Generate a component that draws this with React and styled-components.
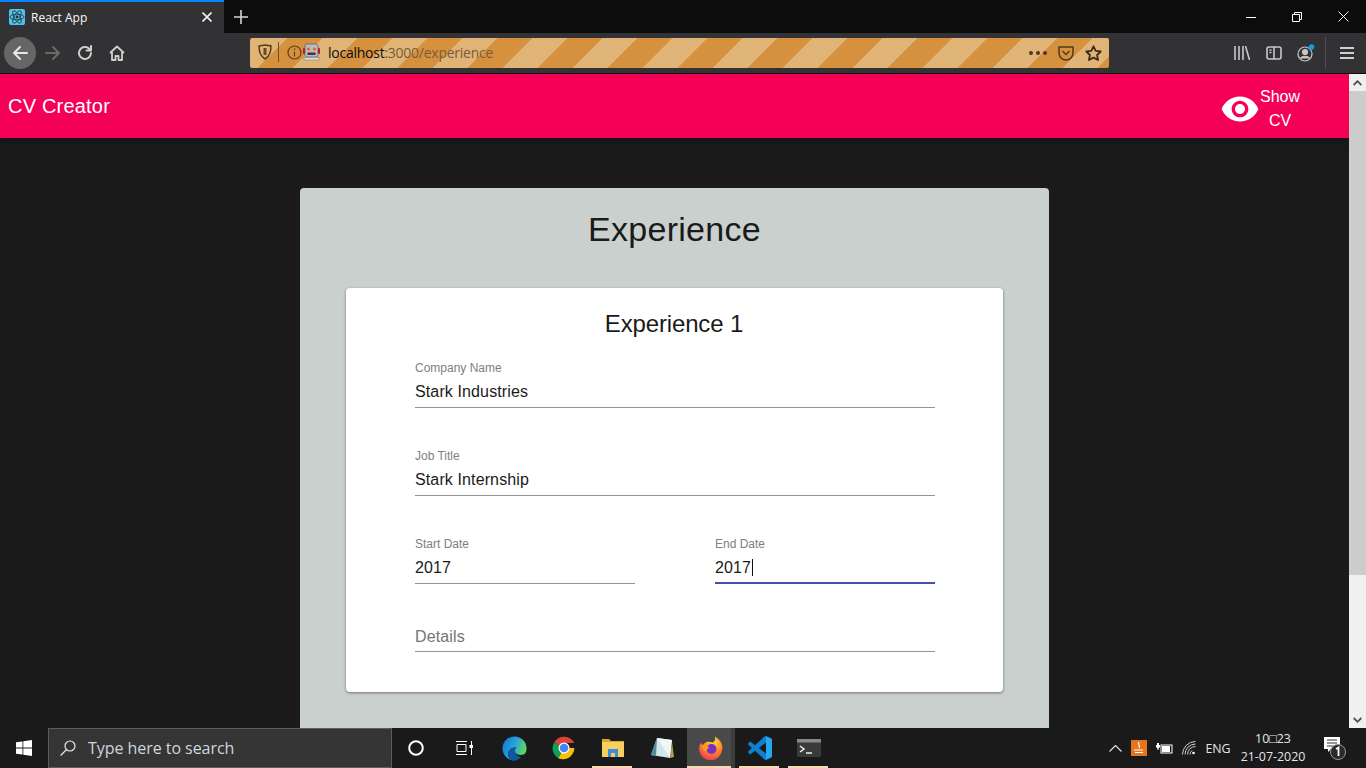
import React from "react";
import styled, { createGlobalStyle } from "styled-components";

const GlobalStyle = createGlobalStyle`
  html, body {
    margin: 0;
    height: 768px;
    overflow: hidden;
    background: #1a1a1a;
    font-family: "Liberation Sans", Arial, sans-serif;
  }
  * { box-sizing: border-box; }
`;

const Screen = styled.div`
  width: 1366px;
  height: 768px;
  display: flex;
  flex-direction: column;
  overflow: hidden;
`;

/* browser chrome */
const TabStrip = styled.div`
  height: 33px;
  background: #0c0c0c;
  display: flex;
  align-items: stretch;
`;

const Tab = styled.div`
  width: 224px;
  background: #323234;
  border-top: 2px solid #0a84ff;
  display: flex;
  align-items: center;
  padding: 0 12px 1px 9px;
  gap: 6px;
  color: #f9f9fa;
  font: 12px "Open Sans", sans-serif;
`;

const TabTitle = styled.span`
  flex: 1;
`;

const NewTab = styled.div`
  width: 34px;
  display: flex;
  align-items: center;
  justify-content: center;
`;

const WindowControls = styled.div`
  margin-left: auto;
  display: flex;
`;

const WindowButton = styled.div`
  width: 46px;
  display: flex;
  align-items: center;
  justify-content: center;
`;

const NavBar = styled.div`
  height: 41px;
  background: #323234;
  border-bottom: 1px solid #0c0c0c;
  display: flex;
  align-items: center;
  padding: 0 8px 0 4px;
`;

const NavButton = styled.div`
  width: ${(p) => p.$w || 32}px;
  height: 32px;
  margin-left: ${(p) => p.$gap || 0}px;
  border-radius: 50%;
  display: flex;
  align-items: center;
  justify-content: center;
  background: ${(p) => (p.$hover ? "#666667" : "transparent")};
`;

const UrlBar = styled.div`
  width: 859px;
  height: 30px;
  margin-left: 117px;
  border-radius: 2px;
  display: flex;
  align-items: center;
  padding: 0 7px 2px 8px;
  background: repeating-linear-gradient(
    135deg,
    #d6913f 0 1.5px,
    #e0b377 1.5px 26.25px,
    #d6913f 26.25px 49.5px
  );
  font: 14px "Open Sans", sans-serif;
  letter-spacing: -0.25px;
`;

const UrlDivider = styled.span`
  width: 1px;
  height: 20px;
  background: #6e5230;
  margin: 0 8px 0 6px;
`;

const RobotSlot = styled.span`
  display: flex;
  margin-left: 1px;
`;

const UrlHost = styled.span`
  color: #0c0c0d;
  margin-left: 8px;
`;

const UrlPath = styled.span`
  color: #7a5c38;
`;

const UrlActions = styled.div`
  margin-left: auto;
  display: flex;
  align-items: center;
  gap: 11px;
  padding-top: 2px;
`;

const NavTools = styled.div`
  margin-left: auto;
  display: flex;
  align-items: center;
  height: 100%;
`;

const ToolDivider = styled.span`
  width: 1px;
  height: 32px;
  background: #4f4f51;
  margin: 0 10px 0 3px;
`;

/* page */
const Viewport = styled.div`
  flex: 1;
  min-height: 0;
  display: flex;
  overflow: hidden;
`;

const Page = styled.div`
  flex: 1;
  min-width: 0;
  background: #1a1a1a;
`;

const AppBar = styled.header`
  height: 64px;
  background: #f50057;
  color: #fff;
  display: flex;
  align-items: center;
  justify-content: space-between;
  padding: 0 49px 0 8px;
  box-shadow: 0 2px 4px rgba(0, 0, 0, 0.4);
`;

const Brand = styled.div`
  font-size: 20px;
  line-height: 1.6;
  letter-spacing: 0.2px;
`;

const ShowButton = styled.div`
  display: flex;
  align-items: center;
  padding-top: 6px;
`;

const ShowLabel = styled.div`
  width: 40px;
  font-size: 16px;
  line-height: 24px;
  text-align: center;
`;

const Paper = styled.section`
  width: 749px;
  margin: 50px auto 0;
  padding: 0 46px 60px;
  background: #cad0ce;
  border-radius: 4px 4px 0 0;
`;

const Heading = styled.h1`
  margin: 0;
  padding: 21px 0 39px;
  font-size: 34px;
  line-height: 40px;
  font-weight: 400;
  letter-spacing: 0.3px;
  text-align: center;
  color: #1a1a1a;
`;

const Card = styled.div`
  width: 657px;
  background: #fff;
  border-radius: 4px;
  padding: 20px 68px 40px 69px;
  box-shadow: 0 1px 3px rgba(0, 0, 0, 0.45);
`;

const CardTitle = styled.h2`
  margin: 0 0 22px;
  padding-right: 2px;
  font-size: 24px;
  line-height: 32px;
  font-weight: 400;
  letter-spacing: -0.15px;
  text-align: center;
  color: #1a1a1a;
`;

const Form = styled.div`
  display: flex;
  flex-direction: column;
  gap: 42px;
`;

const Row = styled.div`
  display: flex;
  justify-content: space-between;
`;

const Field = styled.div`
  width: ${(p) => p.$w || 520}px;
  height: ${(p) => (p.$empty ? "26px" : "46px")};
  display: flex;
  flex-direction: column;
  justify-content: flex-end;
  border-bottom: ${(p) =>
    p.$focused ? "2px solid #3f51b5" : "1px solid #949494"};
  padding-bottom: ${(p) => (p.$focused ? "5px" : "6px")};
`;

const FieldLabel = styled.label`
  font-size: 12px;
  line-height: 14px;
  color: #808080;
  margin-bottom: 7px;
`;

const FieldValue = styled.div`
  font-size: 16px;
  line-height: 19px;
  letter-spacing: 0.12px;
  color: #1a1a1a;
  display: flex;
  align-items: center;
`;

const Placeholder = styled(FieldValue)`
  color: #757575;
  margin-bottom: -1px;
`;

const Caret = styled.span`
  width: 1px;
  height: 17px;
  margin-left: 1px;
  background: #111;
`;

/* scrollbar */
const ScrollBar = styled.div`
  width: 17px;
  background: #f0f0f0;
  display: flex;
  flex-direction: column;
`;

const ScrollArrow = styled.div`
  height: 17px;
  display: flex;
  align-items: center;
  justify-content: center;
`;

const ScrollThumb = styled.div`
  height: 484px;
  background: #cdcdcd;
`;

const ScrollTrack = styled.div`
  flex: 1;
`;

/* taskbar */
const Taskbar = styled.footer`
  height: 40px;
  background: #1a1a1a;
  display: flex;
  align-items: stretch;
  color: #fff;
`;

const StartButton = styled.div`
  width: 48px;
  display: flex;
  align-items: center;
  justify-content: center;
`;

const SearchBox = styled.div`
  width: 344px;
  background: #353535;
  border: 1px solid #5c5c5c;
  display: flex;
  align-items: center;
  padding-left: 11px;
  gap: 12px;
  font: 16px "Open Sans", sans-serif;
  letter-spacing: -0.05px;
  color: #cfd6dc;
`;

const TaskButton = styled.div`
  position: relative;
  width: ${(p) => p.$w || 49}px;
  margin-left: ${(p) => p.$gap || 0}px;
  display: flex;
  align-items: center;
  justify-content: center;
  background: ${(p) =>
    p.$active
      ? "linear-gradient(to right, #494949 44px, #3c3c3c 44px)"
      : "transparent"};
  ${(p) =>
    p.$open &&
    `&::after {
      content: "";
      position: absolute;
      bottom: 0;
      left: ${p.$active ? 0 : 4}px;
      width: ${p.$active ? 44 : 40}px;
      height: 2px;
      background: #f7d7b0;
    }`}
`;

const Tray = styled.div`
  margin-left: auto;
  padding-right: 9px;
  display: flex;
  align-items: center;
  font: 12.4px "Open Sans", sans-serif;
  color: #e6e6e6;
`;

const TrayItem = styled.div`
  width: ${(p) => p.$w}px;
  height: 100%;
  display: flex;
  align-items: center;
  justify-content: center;
`;

const Clock = styled.div`
  width: 76px;
  text-align: center;
  line-height: 18px;
`;

const ic = { fill: "none", stroke: "currentColor", strokeWidth: 2, strokeLinecap: "round", strokeLinejoin: "round" };

const ReactLogo = () => (
  <svg width="16" height="16" viewBox="0 0 16 16">
    <rect width="16" height="16" rx="2" fill="#4fc3e8" />
    <g fill="none" stroke="#21323c" strokeWidth="0.8">
      <ellipse cx="8" cy="8" rx="7" ry="2.8" />
      <ellipse cx="8" cy="8" rx="7" ry="2.8" transform="rotate(60 8 8)" />
      <ellipse cx="8" cy="8" rx="7" ry="2.8" transform="rotate(120 8 8)" />
    </g>
    <circle cx="8" cy="8" r="1.4" fill="#21323c" />
  </svg>
);

const Robot = () => (
  <svg width="17" height="18" viewBox="0 0 17 18">
    <rect x="0" y="5" width="2" height="6" rx="1" fill="#c8102e" />
    <rect x="15" y="5" width="2" height="6" rx="1" fill="#c8102e" />
    <rect x="2" y="1" width="13" height="13" rx="2" fill="#b9bcc0" stroke="#55585c" strokeWidth="0.7" />
    <circle cx="5.5" cy="6" r="1.6" fill="#e8641b" />
    <circle cx="11.5" cy="6" r="1.6" fill="#e8641b" />
    <rect x="4.5" y="9.5" width="8" height="2.5" fill="#4a3030" />
    <rect x="1" y="14.5" width="15" height="2.5" fill="#d9dadc" stroke="#77797c" strokeWidth="0.5" />
  </svg>
);

const Edge = () => (
  <svg width="25" height="25" viewBox="0 0 25 25">
    <defs>
      <linearGradient id="edgeA" x1="0" y1="0" x2="1" y2="0.4">
        <stop offset="0" stopColor="#1273d0" />
        <stop offset="0.55" stopColor="#27a3dc" />
        <stop offset="1" stopColor="#5fd75f" />
      </linearGradient>
    </defs>
    <circle cx="12.5" cy="12.5" r="12" fill="url(#edgeA)" />
    <path d="M24.5 15c-1 3-3.6 4-6 4-3.4 0-6-1.8-6-4.4 0-1.3 1-2.3 2.2-3-4.6-.4-8.700 2.400-8.700 6.600 0 2.800 2.400 5.600 6 6.300 6 .9 11-3 12.500-9.500z" fill="#1a1a1a" />
    <path d="M6 18.200c0-4.200 4.100-7 8.700-6.600-1.200.7-2.200 1.700-2.200 3 0 3.400 3 6 6.500 6.500-2 2.600-5 3.700-8 3.400-3-.5-5-3.400-5-6.300z" fill="#0c59a4" />
  </svg>
);

const Chrome = () => (
  <svg width="24" height="24" viewBox="0 0 24 24">
    <path d="M12 12L2.200 6.300A11.500 11.500 0 0 1 22.400 7H12z" fill="#db4437" />
    <path d="M12 12l-5.700 10.200A11.500 11.500 0 0 1 2.200 6.300z" fill="#0f9d58" />
    <path d="M12 12h10.400A11.500 11.500 0 0 1 6.300 22.200z" fill="#f4c20d" />
    <circle cx="12" cy="12" r="5.500" fill="#fff" />
    <circle cx="12" cy="12" r="4.300" fill="#4285f4" />
  </svg>
);

const Folder = () => (
  <svg width="22" height="20" viewBox="0 0 22 20">
    <path d="M0 1h7l2 2h13v3H0z" fill="#e0a526" />
    <rect x="0" y="4" width="22" height="15" fill="#f6cf5e" />
    <rect x="6" y="11" width="10" height="8" fill="#3a8fd6" />
    <rect x="9" y="15" width="4" height="4" fill="#f6cf5e" />
  </svg>
);

const Notepad = () => (
  <svg width="24" height="24" viewBox="0 0 24 24">
    <path d="M7 2l15 2-2 18L1 19z" fill="#cfe7ea" />
    <path d="M7 2l15 2-2 18z" fill="#eef6f6" />
    <path d="M7 2L1 19l5 1z" fill="#4f8f9c" />
    <path d="M22 6l2 15-4 1z" fill="#b49b58" />
  </svg>
);

const Firefox = () => (
  <svg width="24" height="24" viewBox="0 0 24 24">
    <defs>
      <radialGradient id="foxA" cx="0.6" cy="0.2" r="0.95">
        <stop offset="0" stopColor="#ffd93b" />
        <stop offset="0.45" stopColor="#ff8a2a" />
        <stop offset="1" stopColor="#e8255e" />
      </radialGradient>
    </defs>
    <path d="M16 .5c3.500 2.500 6 4.500 7 8.500.6 2 .6 4 0 5.500A11.500 11.500 0 1 1 2 6.500C2.500 8 3 8.500 4 9c1-2 3-3 5-3.500.5 0 4 1 5 1 2-1.500 2.500-3.500 2-6z" fill="url(#foxA)" />
    <circle cx="12.500" cy="13" r="5" fill="#7a2fc4" />
    <path d="M3 9.500c3-1 6 0 7 2.500-2 1-3 2-2.500 4C5 15 3 12.500 3 9.500z" fill="#ff9a1f" />
  </svg>
);

const VSCode = () => (
  <svg width="24" height="24" viewBox="0 0 24 24">
    <path d="M23.150 2.587L18.210.21a1.494 1.494 0 0 0-1.705.29l-9.460 8.630-4.120-3.128a.999.999 0 0 0-1.276.057L.327 7.261A1 1 0 0 0 .326 8.740L3.899 12 .326 15.260a1 1 0 0 0 .001 1.479L1.650 17.940a.999.999 0 0 0 1.276.057l4.120-3.128 9.460 8.630a1.492 1.492 0 0 0 1.704.29l4.942-2.377A1.500 1.500 0 0 0 24 20.060V3.939a1.500 1.500 0 0 0-.85-1.352zm-5.146 14.861L10.826 12l7.178-5.448v10.896z" fill="#0f7fcf" />
    <path d="M18 .2l5.150 2.387A1.500 1.500 0 0 1 24 3.939v16.120a1.500 1.500 0 0 1-.85 1.352L18 23.800z" fill="#23a9f2" />
  </svg>
);

const TerminalIcon = () => (
  <svg width="24" height="18" viewBox="0 0 24 18">
    <rect width="24" height="18" rx="1" fill="#3a3a3a" />
    <rect width="24" height="3.500" fill="#8a8a8a" />
    <path d="M3 7l4 3-4 3" fill="none" stroke="#eee" strokeWidth="1.500" />
    <path d="M9 14h6" stroke="#eee" strokeWidth="1.500" />
  </svg>
);

export default function App() {
  return (
    <Screen>
      <GlobalStyle />
      <TabStrip>
        <Tab>
          <ReactLogo />
          <TabTitle>React App</TabTitle>
          <svg width="10" height="10" viewBox="0 0 10 10" stroke="#f2f2f2" strokeWidth="1.600">
            <path d="M0.500 0.500l9 9M9.500 0.500l-9 9" />
          </svg>
        </Tab>
        <NewTab>
          <svg width="14" height="14" viewBox="0 0 14 14" stroke="#d6d6d6" strokeWidth="1.600">
            <path d="M7 0v14M0 7h14" />
          </svg>
        </NewTab>
        <WindowControls>
          <WindowButton>
            <svg width="10" height="10" viewBox="0 0 10 10" stroke="#fff"><path d="M0 5.500h10" /></svg>
          </WindowButton>
          <WindowButton>
            <svg width="10" height="10" viewBox="0 0 10 10" fill="none" stroke="#fff"><path d="M0.500 2.500h7v7h-7zM2.500 2.500v-2h7v7h-2" /></svg>
          </WindowButton>
          <WindowButton>
            <svg width="11" height="11" viewBox="0 0 11 11" stroke="#fff"><path d="M0.500 0.500l10 10M10.500 0.500l-10 10" /></svg>
          </WindowButton>
        </WindowControls>
      </TabStrip>

      <NavBar>
        <NavButton $hover>
          <svg width="16" height="16" viewBox="0 0 16 16" {...ic} stroke="#e8e8e8"><path d="M15 8H2M8 2L2 8l6 6" /></svg>
        </NavButton>
        <NavButton $gap={1}>
          <svg width="16" height="16" viewBox="0 0 16 16" {...ic} stroke="#6b6b6c"><path d="M1 8h13M8 2l6 6-6 6" /></svg>
        </NavButton>
        <NavButton>
          <svg width="16" height="16" viewBox="0 0 16 16" {...ic} stroke="#cfcfd0"><path d="M14 8a6 6 0 1 1-1.800-4.300L14 5.500M14 1v4.500H9.500" /></svg>
        </NavButton>
        <NavButton>
          <svg width="16" height="16" viewBox="0 0 16 16" fill="none" stroke="#cfcfd0" strokeWidth="1.800" strokeLinejoin="round"><path d="M1 8l7-6.500L15 8M3 7v8h3.500v-4h3v4H13V7" /></svg>
        </NavButton>
        <UrlBar>
          <svg width="14" height="16" viewBox="0 0 14 16" fill="#6b4a20" stroke="#5a3e1a" strokeWidth="1.500"><path d="M1 2l6-1 6 1c0 6-1 10-6 13C2 12 1 8 1 2z" fill="none" /><path d="M5.500 4h3v7h-3z" stroke="none" /></svg>
          <UrlDivider />
          <svg width="15" height="15" viewBox="0 0 15 15" fill="none" stroke="#5a3e1a" strokeWidth="1.200"><circle cx="7.500" cy="7.500" r="6.500" /><path d="M7.500 6.500v5M7.500 3.500v1.500" /></svg>
          <RobotSlot><Robot /></RobotSlot>
          <UrlHost>localhost</UrlHost>
          <UrlPath>:3000/experience</UrlPath>
          <UrlActions>
            <svg width="18" height="4" viewBox="0 0 18 4" fill="#4e3a20"><circle cx="2" cy="2" r="2" /><circle cx="9" cy="2" r="2" /><circle cx="16" cy="2" r="2" /></svg>
            <svg width="16" height="16" viewBox="0 0 16 16" fill="none" stroke="#4e3a20" strokeWidth="1.500" strokeLinecap="round" strokeLinejoin="round"><path d="M1 2h14v6a7 7 0 0 1-14 0zM5 6.500l3 3 3-3" /></svg>
            <svg width="17" height="16" viewBox="0 0 17 16" fill="none" stroke="#3e2d14" strokeWidth="1.800" strokeLinejoin="round"><path d="M8.500 1.300l2.200 4.500 5 .7-3.600 3.500.9 5-4.500-2.400L4 15l.9-5L1.300 6.500l5-.7z" /></svg>
          </UrlActions>
        </UrlBar>
        <NavTools>
          <NavButton>
            <svg width="16" height="14" viewBox="0 0 16 14" fill="none" stroke="#c8c8c9" strokeWidth="1.600"><path d="M1 0v14M5 0v14M9 0v14M11.500 0l4 14" /></svg>
          </NavButton>
          <NavButton>
            <svg width="16" height="14" viewBox="0 0 16 14" fill="none" stroke="#c8c8c9" strokeWidth="1.600"><rect x="1" y="1" width="14" height="12" rx="2" /><path d="M8 1v12M3.500 4h2M3.500 6.500h2" /></svg>
          </NavButton>
          <NavButton>
            <svg width="20" height="20" viewBox="0 0 20 20" fill="none" stroke="#c8c8c9" strokeWidth="1.200"><circle cx="9" cy="11" r="7" /><circle cx="9" cy="9" r="2.500" fill="#c8c8c9" /><path d="M4.500 15.500c1-3 8-3 9 0" fill="#c8c8c9" /><circle cx="15.500" cy="4" r="2.800" fill="#0a9dea" stroke="none" /></svg>
          </NavButton>
          <ToolDivider />
          <NavButton $w={22}>
            <svg width="14" height="12" viewBox="0 0 14 12" stroke="#d0d0d1" strokeWidth="1.800"><path d="M0 1h14M0 6h14M0 11h14" /></svg>
          </NavButton>
        </NavTools>
      </NavBar>

      <Viewport>
        <Page>
          <AppBar>
            <Brand>CV Creator</Brand>
            <ShowButton>
              <svg width="40" height="40" viewBox="0 0 24 24" fill="#fff">
                <path d="M12 4.500C7 4.500 2.730 7.610 1 12c1.730 4.390 6 7.500 11 7.500s9.270-3.110 11-7.500c-1.730-4.390-6-7.500-11-7.500zM12 17c-2.760 0-5-2.240-5-5s2.240-5 5-5 5 2.240 5 5-2.240 5-5 5zm0-8c-1.660 0-3 1.340-3 3s1.340 3 3 3 3-1.340 3-3-1.340-3-3-3z" />
              </svg>
              <ShowLabel>Show<br />CV</ShowLabel>
            </ShowButton>
          </AppBar>
          <Paper>
            <Heading>Experience</Heading>
            <Card>
              <CardTitle>Experience 1</CardTitle>
              <Form>
                <Field>
                  <FieldLabel>Company Name</FieldLabel>
                  <FieldValue>Stark Industries</FieldValue>
                </Field>
                <Field>
                  <FieldLabel>Job Title</FieldLabel>
                  <FieldValue>Stark Internship</FieldValue>
                </Field>
                <Row>
                  <Field $w={220}>
                    <FieldLabel>Start Date</FieldLabel>
                    <FieldValue>2017</FieldValue>
                  </Field>
                  <Field $w={220} $focused>
                    <FieldLabel>End Date</FieldLabel>
                    <FieldValue>2017<Caret /></FieldValue>
                  </Field>
                </Row>
                <Field $empty>
                  <Placeholder>Details</Placeholder>
                </Field>
              </Form>
            </Card>
          </Paper>
        </Page>
        <ScrollBar>
          <ScrollArrow>
            <svg width="9" height="6" viewBox="0 0 9 6" fill="none" stroke="#505050" strokeWidth="1.800"><path d="M0.700 5l3.800-3.800L8.300 5" /></svg>
          </ScrollArrow>
          <ScrollThumb />
          <ScrollTrack />
          <ScrollArrow>
            <svg width="9" height="6" viewBox="0 0 9 6" fill="none" stroke="#505050" strokeWidth="1.800"><path d="M0.700 1l3.800 3.800L8.300 1" /></svg>
          </ScrollArrow>
        </ScrollBar>
      </Viewport>

      <Taskbar>
        <StartButton>
          <svg width="16" height="16" viewBox="0 0 16 16" fill="#fff"><path d="M0 2.300l6.500-.9v6.200H0zM7.300 1.300L16 0v7.600H7.300zM0 8.400h6.500v6.200L0 13.700zM7.300 8.400H16V16l-8.700-1.300z" /></svg>
        </StartButton>
        <SearchBox>
          <svg width="16" height="16" viewBox="0 0 16 16" fill="none" stroke="#e8e8e8" strokeWidth="1.200"><circle cx="10" cy="6" r="5" /><path d="M6.500 9.500L0.700 15.500" /></svg>
          Type here to search
        </SearchBox>
        <TaskButton $w={48}>
          <svg width="16" height="16" viewBox="0 0 16 16" fill="none" stroke="#fff" strokeWidth="2"><circle cx="8" cy="8" r="6.800" /></svg>
        </TaskButton>
        <TaskButton $w={48}>
          <svg width="17" height="14" viewBox="0 0 17 14" fill="none" stroke="#fff"><path d="M0 0.500h11M0 13.500h11M1 3.500h9v7H1zM15.500 0v14" /><rect x="13.500" y="4" width="3.500" height="3" fill="#fff" stroke="none" /></svg>
        </TaskButton>
        <TaskButton $gap={2}><Edge /></TaskButton>
        <TaskButton><Chrome /></TaskButton>
        <TaskButton $open><Folder /></TaskButton>
        <TaskButton><Notepad /></TaskButton>
        <TaskButton $open $active $w={48} $gap={1}><Firefox /></TaskButton>
        <TaskButton $open><VSCode /></TaskButton>
        <TaskButton $open><TerminalIcon /></TaskButton>
        <Tray>
          <TrayItem $w={24}>
            <svg width="13" height="7" viewBox="0 0 13 7" fill="none" stroke="#e8e8e8" strokeWidth="1.100"><path d="M0.500 6.500l6-6 6 6" /></svg>
          </TrayItem>
          <TrayItem $w={24}>
            <svg width="16" height="16" viewBox="0 0 16 16"><rect width="16" height="16" fill="#e8741e" /><path d="M8 2c-2 3 2 3 0 6M3 10h9M4 12.500h8" fill="none" stroke="#fff" strokeWidth="1.200" /></svg>
          </TrayItem>
          <TrayItem $w={26}>
            <svg width="17" height="11" viewBox="0 0 17 11" fill="#fff"><path d="M1 0v2H0v2l1.500 1.500V7h1V5.500L4 4V2H3V0z" /><rect x="5" y="2" width="11" height="8" fill="none" stroke="#fff" /><rect x="6" y="3" width="8" height="6" /></svg>
          </TrayItem>
          <TrayItem $w={24}>
            <svg width="14" height="14" viewBox="0 0 14 14" fill="none" stroke="#cfcfcf"><path d="M0.500 13.500a13 13 0 0 1 13-13M3 13.500a10.500 10.500 0 0 1 10.500-10.500M5.500 13.500a8 8 0 0 1 8-8M8 13.500a5.500 5.500 0 0 1 2-4" /><circle cx="11.500" cy="12" r="1.300" fill="#fff" stroke="none" /></svg>
          </TrayItem>
          <TrayItem $w={34}>ENG</TrayItem>
          <Clock>10□23<br />21-07-2020</Clock>
          <TrayItem $w={46}>
            <svg width="25" height="24" viewBox="0 0 25 24"><path d="M2 1h16v12H9l-3 3v-3H2z" fill="#fff" /><path d="M5 4h10M5 7h10M5 10h7" stroke="#333" /><circle cx="16" cy="16" r="7.500" fill="#2a2a2a" stroke="#999" /><path d="M14 13l2.500-1.500V20" fill="none" stroke="#fff" strokeWidth="1.800" /></svg>
          </TrayItem>
        </Tray>
      </Taskbar>
    </Screen>
  );
}
